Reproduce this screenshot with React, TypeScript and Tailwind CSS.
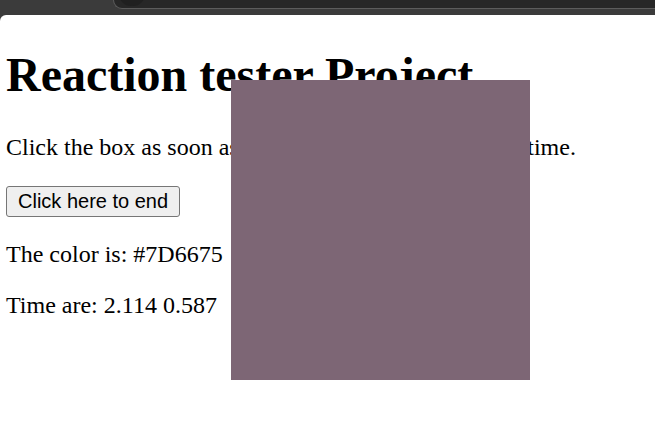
import React from "react";

export default function App() {
  return (
    <div className="w-[655px] h-[443px] overflow-hidden bg-[#3b3b3b] flex flex-col">
      <div className="h-[15px] shrink-0 bg-[#3b3b3b] flex items-start pl-[113px]">
        <div className="relative flex-1 h-[9px] rounded-bl-[14px] bg-[#272727] border-b border-l border-[#5c5c5c] overflow-hidden">
          <div className="absolute left-[5px] top-[-18px] w-[26px] h-[24px] rounded-full bg-[#202020]" />
        </div>
      </div>
      <div
        className="relative flex-1 bg-white rounded-tl-[6px] pl-[6px] pt-[32px] text-black flex flex-col items-start"
        style={{ fontFamily: '"Liberation Serif", "Times New Roman", serif' }}
      >
        <h1 className="text-[48px] font-bold leading-[55px] m-0">Reaction tester Project</h1>
        <p className="text-[24px] leading-[27.6px] mt-[32px]">
          Click the box as soon as it shows to test your reaction time.
        </p>
        <div className="mt-[24px]">
          <button
            className="h-[31px] px-[11px] text-[20px] leading-[23px] bg-[#efefef] border border-[#767676] rounded-[3px] text-black"
            style={{ fontFamily: '"Liberation Sans", Arial, sans-serif' }}
          >
            Click here to end
          </button>
        </div>
        <p className="text-[24px] leading-[27.6px] mt-[24px]">The color is: #7D6675</p>
        <p className="text-[24px] leading-[27.6px] mt-[24px]">Time are: 2.114 0.587</p>
        <div className="absolute left-[231px] top-[65px] w-[299px] h-[300px] bg-[#7d6675]" />
      </div>
    </div>
  );
}
